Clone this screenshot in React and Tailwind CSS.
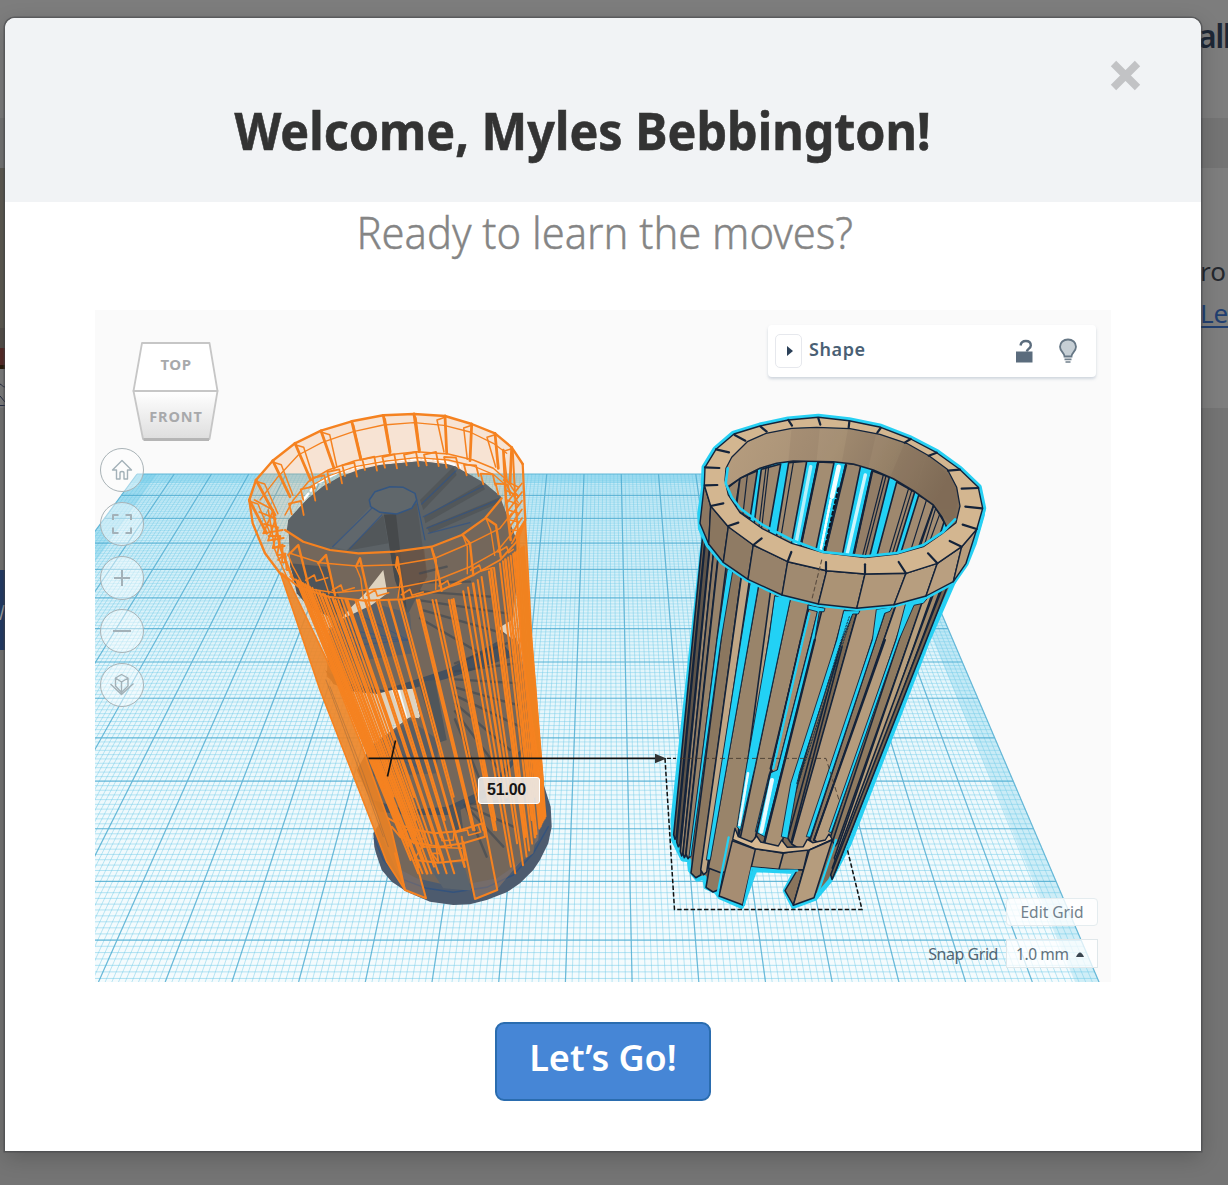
import React from "react";

/* ---------- geometry helpers ---------- */
// Each model part is described in its own tile at triple scale.
const tile = (ox, oy) => (list) =>
  list.map(([x, y]) => `${(ox + x / 3).toFixed(1)},${(oy + y / 3).toFixed(1)}`).join(" ");
const rimR = tile(660, 400);
const bodyR = tile(640, 640);
const rimL = tile(240, 400);
const bodyL = tile(320, 640);

const rowY = (k) => (474 + 5.449 * k) / (1 - 0.03234 * k);
const colTop = (i) => 137 + i * 37.25;
const colBottom = (i) => -235 + i * 66.7;

const fineRows = Array.from({ length: 137 }, (_, i) => i / 10);
const majorRows = Array.from({ length: 14 }, (_, i) => i);
const fineCols = Array.from({ length: 201 }, (_, i) => i / 10);
const majorCols = Array.from({ length: 21 }, (_, i) => i);
const edgeX = (i, y) => colTop(i) + ((colBottom(i) - colTop(i)) * (y - 474)) / 508;

function Workplane() {
  return (
    <g>
      <polygon points="137,474 882,474 1099,982 -235,982" fill="#f4fbfd" />
      <polygon points="137,474 882,474 1099,982 -235,982" fill="url(#far)" />
      <polygon points="137,474 882,474 886,483 130,483" fill="#8fd7ee" opacity=".6" />
      <polygon points="882,474 1099,982 1075,982 864,474" fill="#5cc4e6" opacity=".24" />
      <polygon points="137,474 157,474 -200,982 -235,982" fill="#5cc4e6" opacity=".3" />
      <g stroke="#6fcbe9" strokeWidth="1">
        {fineRows.map((k) => (
          <line key={k} x1={edgeX(0, rowY(k))} x2={edgeX(20, rowY(k))} y1={rowY(k)} y2={rowY(k)} opacity={0.3 + k * 0.015} />
        ))}
      </g>
      <g stroke="#6fcbe9" strokeWidth="1" opacity=".46">
        {fineCols.map((i) => (
          <line key={i} x1={colTop(i)} y1="474" x2={colBottom(i)} y2="982" />
        ))}
      </g>
      <g stroke="#45a5cc" strokeWidth="1.2" opacity=".68">
        {majorRows.map((k) => (
          <line key={k} x1={edgeX(0, rowY(k))} x2={edgeX(20, rowY(k))} y1={rowY(k)} y2={rowY(k)} />
        ))}
        {majorCols.map((i) => (
          <line key={i} x1={colTop(i)} y1="474" x2={colBottom(i)} y2="982" />
        ))}
      </g>
    </g>
  );
}

/* ---------- solid tower ---------- */
const outer = [[135,202],[168,148],[222,102],[300,78],[385,60],[475,52],[567,62],[662,82],[752,117],[830,158],[898,207],[955,262],[968,325],[950,388],[905,440],[832,490],[738,520],[615,522],[500,512],[383,485],[280,435],[205,380],[152,318],[133,255]];
const inner = [[198,205],[215,172],[262,125],[318,100],[395,85],[470,82],[570,86],[660,103],[740,130],[808,168],[862,208],[890,262],[900,318],[888,368],[845,402],[790,440],[710,462],[615,473],[490,458],[395,430],[305,385],[240,338],[205,285],[195,240]];
const ticks = [[135,202,178,204],[168,148,207,157],[224,105,256,122],[302,80,320,95],[385,60,396,77],[475,55,481,74],[568,65,566,83],[662,84,652,98],[752,117,734,128],[830,158,806,167],[900,209,864,212],[955,264,905,266],[966,325,916,320],[950,387,908,374],[905,440,869,423],[832,490,804,460],[738,520,716,486],[615,522,615,493],[498,514,498,486],[383,485,394,456],[280,435,305,415],[205,378,235,368],[152,318,190,310],[136,256,172,255]];
const rimSide = [[133,255],[152,318],[205,380],[280,435],[383,485],[500,512],[615,522],[738,520],[832,490],[905,440],[950,388],[968,325],[966,345],[942,430],[918,490],[880,545],[800,588],[700,614],[590,625],[475,612],[365,585],[262,537],[188,487],[145,435],[122,385],[120,340]];
const rimFacets = [
  { p: [[133,255],[152,318],[146,432],[120,370]], f: "#8d7862" },
  { p: [[152,318],[205,380],[190,487],[146,432]], f: "#8a765f" },
  { p: [[205,380],[280,435],[264,538],[190,487]], f: "#8f7b64" },
  { p: [[280,435],[383,485],[366,585],[264,538]], f: "#97826a" },
  { p: [[383,485],[500,512],[475,612],[366,585]], f: "#a08a70" },
  { p: [[500,512],[615,522],[590,625],[475,612]], f: "#ab9375" },
  { p: [[615,522],[738,520],[702,614],[590,625]], f: "#b1987a" },
  { p: [[738,520],[832,490],[798,588],[702,614]], f: "#b79e7f" },
  { p: [[832,490],[905,440],[880,545],[798,588]], f: "#b99f80" },
  { p: [[905,440],[950,388],[918,490],[880,545]], f: "#b89d7c" },
];
// [top-left x, top-right x, bottom-left x, bottom-right x, bottom y, fill]
const slats = [
  [158,166,101,109,590,"#6f604f"],[168,181,110,120,612,"#5d5349"],[183,194,121,129,640,"#9a856c"],
  [194,207,129,137,645,"#8f7b64"],[208,231,138,150,648,"#97836b"],
  [243,278,153,182,705,"#8b775f"],[278,302,182,200,696,"#c0a685"],
  [327,360,198,240,748,"#8f7a62"],[360,386,262,296,590,"#b8a080"],[327,372,205,280,690,"#99846a"],
  [425,482,301,345,600,"#9f896e"],[484,512,391,412,392,"#a58e72"],
  [524,590,372,424,615,"#a99174"],[606,628,443,462,600,"#7c6953"],[628,697,455,500,618,"#b0977a"],
  [708,732,510,530,606,"#8c775f"],[732,768,522,566,606,"#b59c7d"],
  [777,808,578,592,610,"#8f7a60"],[808,828,583,597,660,"#b89f7d"],[830,845,577,588,690,"#a28b6c"],[847,859,572,580,710,"#75634e"],
];
const slatPoints = ([a, b, c, d, y], top) => {
  const t = top / y;
  return bodyR([[a + (c - a) * t, top], [b + (d - b) * t, top], [d, y], [(c + d) / 2, y + 8], [c, y - 6]]);
};
const innerSlats = [
  [[205,262],[240,235],[225,330],[212,300]], [[240,235],[292,212],[270,356],[228,330]],
  [[304,208],[362,192],[325,402],[282,375]], [[386,188],[440,184],[394,432],[349,412]],
  [[474,186],[522,188],[466,458],[422,440]], [[558,190],[602,196],[546,470],[494,460]],
  [[636,212],[688,232],[628,474],[580,472]], [[710,246],[764,276],[706,466],[650,470]],
  [[776,286],[822,312],[772,452],[722,460]], [[822,314],[852,366],[838,410],[778,446]],
];
const innerLines = [[262,226,248,350],[318,202,296,388],[326,200,304,392],[400,187,362,415],[670,225,606,474],[678,228,614,474],[745,268,685,468],[755,272,695,468],[800,298,750,458],[828,322,790,445],[840,340,805,435]];
const cyanOnBody = [
  [[263,-214],[278,-206],[243,0],[153,650],[147,650],[231,0]],
  [[332,-175],[356,-167],[327,0],[211,660],[199,660],[303,0]],
  [[405,-132],[452,-126],[425,0],[345,380],[301,572],[291,560],[316,400],[386,0]],
  [[505,-105],[555,-95],[552,-85],[538,-85],[524,0],[428,380],[374,590],[346,575],[388,400],[412,390],[512,0],[532,-85],[505,-92]],
  [[612,-88],[660,-88],[655,-78],[638,-78],[606,0],[478,400],[443,595],[424,590],[452,430],[590,0]],
  [[710,-92],[758,-100],[750,-86],[734,-80],[708,0],[511,592],[499,590],[697,0]],
  [[798,-110],[865,-128],[850,-110],[822,-104],[777,0],[574,578],[566,575],[768,0]],
];

function SolidTower() {
  return (
    <g strokeLinejoin="round" strokeLinecap="round">
      <polygon
        points={`${rimR([[122,350],[130,418]])} ${bodyR([[98,540],[100,600],[112,625],[128,658],[147,660],[150,690],[172,718],[193,712],[198,742],[228,755],[240,772],[305,800],[345,690],[465,695],[435,752],[460,800],[525,776],[570,722],[628,612],[865,0]])} ${rimR([[888,530],[950,400]])}`}
        fill="#7d6a55" stroke="#27d0f3" strokeWidth="4.5"
      />
      <g stroke="#14233a" strokeWidth="1.6">
        {slats.map((s, i) => <polygon key={i} points={slatPoints(s, i < 6 ? -310 : -240)} fill={s[5]} />)}
      </g>
      <g fill="#22d1f5" stroke="#14233a" strokeWidth=".9">
        {cyanOnBody.map((p, i) => <polygon key={i} points={bodyR(p)} />)}
      </g>
      <g stroke="#14233a" strokeWidth="2.4">
        <polyline points={bodyR([[524,0],[372,612]])} fill="none" />
        <polyline points={bodyR([[482,0],[345,600]])} fill="none" strokeWidth="1.8" />
        <polyline points={bodyR([[606,20],[455,600]])} fill="none" strokeWidth="1.6" />
        <polyline points={bodyR([[735,0],[522,600]])} fill="none" strokeWidth="2" />
      </g>
      <g stroke="#e8faff" strokeDasharray="5 1.5" fill="none">
        <polyline points={bodyR([[324,400],[298,555]])} strokeWidth="2.6" />
        <polyline points={bodyR([[396,420],[364,575]])} strokeWidth="4" />
      </g>
      <g stroke="#163246" strokeWidth="1" strokeDasharray="1.5 1.5" fill="none">
        <polyline points={bodyR([[508,-80],[488,0],[400,385]])} stroke="#22d1f5" strokeWidth="2.4" />
        <polyline points={bodyR([[635,-70],[612,0],[475,430]])} />
        <polyline points={bodyR([[628,-70],[604,0],[470,430]])} />
      </g>

      {/* doorway */}
      <polygon points={bodyR([[337,625],[430,640],[505,625],[490,690],[415,688],[330,680]])} fill="#a58e72" stroke="#14233a" strokeWidth="1.4" />
      <polygon points={bodyR([[278,598],[285,565],[295,590],[335,606],[350,588],[362,606],[415,618],[425,600],[442,622],[490,620],[502,598],[518,608],[556,600],[567,582],[577,598],[508,630],[430,638],[345,626]])} fill="#d7b993" stroke="#14233a" strokeWidth="1.4" />
      <polygon points={bodyR([[277,602],[346,628],[308,795],[237,768]])} fill="#a68d72" stroke="#14233a" strokeWidth="1.5" />
      <polygon points={bodyR([[490,690],[472,690],[435,752],[460,795]])} fill="#89745c" stroke="#14233a" strokeWidth="1.4" />
      <polygon points={bodyR([[508,630],[577,600],[522,773],[460,796]])} fill="#b59c7d" stroke="#14233a" strokeWidth="1.5" />
      <polyline points={bodyR([[430,640],[417,688]])} stroke="#14233a" strokeWidth="1.6" />
      <g stroke="#22d1f5" strokeWidth="2.2" fill="none">
        <polyline points={bodyR([[266,592],[232,765]])} />
        <polyline points={bodyR([[588,600],[532,765]])} />
        <polyline points={bodyR([[312,795],[336,684],[415,692],[472,692]])} />
      </g>

      {/* rim */}
      <polygon points={rimR(rimSide)} fill="#8d7862" stroke="#27d0f3" strokeWidth="5.6" />
      <polygon points={rimR(outer)} stroke="#27d0f3" strokeWidth="7" fill="none" />
      {rimFacets.map((r, i) => <polygon key={i} points={rimR(r.p)} fill={r.f} stroke="#14233a" strokeWidth="1.4" />)}
      <polygon points={rimR(outer)} fill="#d3b690" stroke="#14233a" strokeWidth="1.4" />
      <clipPath id="opening"><polygon points={rimR(inner)} /></clipPath>
      <g clipPath="url(#opening)">
        <rect x="700" y="410" width="290" height="170" fill="#22d1f5" />
        <g stroke="#f3feff" strokeWidth="3.4">
          <polyline points={rimR([[536,200],[516,290]])} strokeWidth="4.5" />
          <polyline points={rimR([[512,300],[482,450]])} strokeDasharray="3 2" strokeWidth="2.6" />
          <polyline points={rimR([[452,200],[408,430]])} stroke="#b6effa" strokeDasharray="4 1" />
          <polyline points={rimR([[616,225],[562,460]])} stroke="#cdf5fc" strokeDasharray="4 1" />
        </g>
        <g stroke="#14233a" strokeWidth="1.6">
          {innerSlats.map((s, i) => (
            <polygon key={i} points={rimR(s)} fill={["#9a856c", "#937e67", "#9e886e", "#a18b71", "#a38d73"][i % 5]} />
          ))}
          {innerLines.map(([a, b, c, d], i) => (
            <line key={i} x1={660 + a / 3} y1={400 + b / 3} x2={660 + c / 3} y2={400 + d / 3} strokeWidth="1.2" />
          ))}
          {[[474,190,422,438],[558,196,494,458],[636,216,580,468]].map(([a, b, c, d], i) => (
            <line key={i} x1={660 + a / 3} y1={400 + b / 3} x2={660 + c / 3} y2={400 + d / 3} strokeWidth="2.4" />
          ))}
        </g>
        <polyline points={rimR([[535,265],[520,330],[492,455]])} fill="none" stroke="#0c1522" strokeWidth="2" strokeDasharray="3 3" />
        <polygon points={rimR([[190,270],[240,235],[300,205],[350,190],[400,183],[520,185],[580,192],[640,210],[700,236],[760,272],[820,315],[845,350],[862,385],[920,370],[920,230],[760,80],[480,60],[260,80],[180,180]])} fill="url(#wall)" stroke="#14233a" strokeWidth="1.6" />
        <g fill="#5b4a3a" opacity=".09">
          <polygon points={rimR([[395,80],[480,80],[470,182],[385,186]])} />
          <polygon points={rimR([[565,80],[650,95],[625,205],[545,188]])} />
          <polygon points={rimR([[735,125],[800,160],[765,275],[690,232]])} />
          <polygon points={rimR([[800,160],[900,260],[880,380],[820,315],[765,275]])} />
        </g>
      </g>
      <polygon points={rimR(inner)} fill="none" stroke="#14233a" strokeWidth="1.3" />
      <polyline points={rimR([[203,205],[197,250],[215,292],[240,325],[305,373],[395,420],[490,456],[615,469],[710,459],[790,435],[850,395],[885,358]])} fill="none" stroke="#22d1f5" strokeWidth="2.6" />
      <g stroke="#14233a" strokeWidth="2.2">
        {ticks.map(([a, b, c, d], i) => (
          <line key={i} x1={660 + a / 3} y1={400 + b / 3} x2={660 + c / 3} y2={400 + d / 3} />
        ))}
      </g>
      <polyline points={rimR([[485,480],[455,600]])} fill="none" stroke="#5b4d40" strokeWidth="1.1" strokeDasharray="4 3" />
    </g>
  );
}

/* ---------- wireframe tower ---------- */
const hoop = [[28,300],[48,240],[98,182],[165,130],[243,92],[335,64],[430,46],[522,42],[615,48],[695,72],[765,100],[815,142],[848,192]];
const hoopFoot = [[80,400],[105,345],[150,290],[212,240],[282,205],[362,178],[450,158],[538,155],[620,160],[690,182],[775,205],[810,250]];
const hoopLow = [[135,345],[160,300],[205,245],[265,210],[345,182],[440,165],[530,155],[625,162],[700,180],[760,205],[800,240],[835,290]];
const notches = [[165,305],[200,262],[235,228],[280,210],[325,190],[385,172],[445,165],[510,158],[570,158],[630,165],[690,188],[740,215],[785,245]];
const frontTop = [[135,390],[190,425],[270,450],[355,460],[465,455],[575,440],[665,405],[735,355],[785,295]];
const frontMid = [[150,460],[240,488],[350,498],[470,494],[585,475],[690,430],[780,385],[815,340]];
const frontLow = [[125,520],[175,560],[265,590],[375,602],[490,598],[605,570],[700,525],[780,480],[830,425]];
const frontLow2 = [[150,530],[215,568],[285,578],[375,570],[490,560],[590,540],[690,500],[770,455],[820,395]];
const frontPosts = [
  [[145,465],[175,435],[205,555]], [[235,490],[258,465],[285,585]], [[348,500],[360,475],[388,600]], [[468,500],[472,472],[492,598]],
  [[575,445],[590,500],[605,572]], [[668,405],[690,430],[700,525]], [[738,355],[768,375],[782,470]],
];

// [x1, y1, x2, y2, width]
const wires = [];
const spread = [2,7,12,17,22,27,32,38,46,54,62,66,74,84,90,98,108,119,124,146,152,174,182,206,213,240,268,276,320,326,364,374,410,418,424,455,470,486,500,512,534,541,549,566,575,582,590,597,604,609,614,619,624,629,634];
const ends = [660, 590, 700, 620, 540, 680, 720, 470, 610, 700];
spread.forEach((x, i) => {
  const slope = 0.41 - (0.33 * x) / 634;
  const start = -120 + (x > 420 ? -(x - 420) * 0.75 : x < 90 ? -(90 - x) * 0.7 : 0);
  const limit = x > 500 ? 690 - (x - 500) * 1.2 : x > 260 && x < 440 ? 570 : 700;
  const end = Math.min(ends[i % 10], limit);
  wires.push([x + slope * start, start, x + slope * end, end, i % 4 === 1 ? 2.6 : 2]);
});

function WireTower() {
  return (
    <g strokeLinejoin="round" strokeLinecap="round">
      <polygon points={bodyL([[185,540],[160,580],[163,620],[168,640],[185,690],[215,725],[260,755],[330,785],[400,795],[450,793],[500,780],[560,757],[600,730],[640,690],[660,660],[685,610],[695,560],[692,500],[670,430],[400,500]])} fill="#4d5b6e" />
      <polyline points={bodyL([[163,595],[190,660],[240,715],[320,745],[400,757],[500,742],[580,705],[640,640],[685,560]])} fill="none" stroke="#34537d" strokeWidth="1.4" />
      <polygon points={`${rimL([[28,300],[48,240],[98,182],[165,130],[243,92],[335,64],[430,46],[522,42],[615,48],[695,72],[765,100],[815,142],[848,192],[856,360],[830,440]])} ${bodyL([[635,0],[670,430],[655,600],[530,750],[465,777],[430,665],[290,660],[318,775],[255,750],[0,150]])} ${rimL([[120,520],[75,460]])}`} fill="#f0a060" opacity=".25" />
      <polygon points={`${rimL([[145,360],[205,295],[300,230],[420,195],[540,184],[640,195],[655,208],[780,290],[838,440],[832,540],[815,690]])} ${bodyL([[600,20],[645,300],[660,500],[640,640],[530,715],[400,740],[290,715],[225,680],[170,520],[110,390],[150,320],[270,230],[300,230],[280,145],[170,160],[75,150],[20,110]])} ${rimL([[270,640],[190,600],[150,500]])}`} fill="#74675b" />
      {/* stair landing and centre post */}
      <polygon points={rimL([[145,360],[180,320],[205,295],[250,258],[300,230],[360,208],[420,195],[540,184],[640,195],[665,210],[735,250],[785,292],[735,355],[665,405],[575,440],[465,455],[355,460],[270,450],[190,425],[140,392]])} fill="#5c6266" />
      <g fill="#4e5356" opacity=".7">
        <polygon points={rimL([[390,320],[430,345],[320,450],[278,440]])} fill="#626a6f" />
        <polygon points={rimL([[430,345],[445,430],[320,452]])} />
        <polygon points={rimL([[640,200],[650,225],[550,330],[540,300]])} />
        <polygon points={rimL([[725,250],[735,268],[556,370],[552,350]])} />
        <polygon points={rimL([[780,292],[770,312],[570,400],[560,382]])} />
      </g>
      <g stroke="#2f5388" strokeWidth="1.2" fill="none" opacity=".7">
        <polyline points={rimL([[278,440],[395,325]])} /><polyline points={rimL([[330,445],[425,345]])} />
        <polyline points={rimL([[545,312],[648,212]])} /><polyline points={rimL([[550,350],[730,258]])} />
        <polyline points={rimL([[560,385],[775,300]])} /><polyline points={rimL([[565,400],[690,368]])} />
      </g>
      <polygon points={rimL([[430,330],[530,310],[560,530],[500,650],[465,540]])} fill="#54585b" />
      <polygon points={rimL([[432,345],[468,342],[500,630],[465,540]])} fill="#46494b" />
      <polygon points={rimL([[465,458],[552,445],[562,530],[520,600],[490,590]])} fill="#6b5545" opacity=".8" />
      <polygon points={rimL([[388,300],[405,275],[450,260],[490,262],[525,280],[530,300],[515,325],[470,342],[420,337],[392,320]])} fill="#60676b" stroke="#345682" strokeWidth="1.5" />
      <polyline points={rimL([[530,300],[555,420]])} fill="none" stroke="#345682" strokeWidth="1.2" />
      {/* spiral flights */}
      <g fill="#4f5459">
        <polygon points={rimL([[150,490],[260,500],[310,620],[280,655],[210,625],[170,580]])} />
        <polygon points={rimL([[290,665],[400,610],[510,640],[520,760],[300,790]])} fill="#5a6068" />
        <polygon points={bodyL([[15,90],[80,130],[190,150],[300,115],[390,85],[540,0],[580,50],[400,110],[280,145],[200,162],[110,160],[40,132]])} fill="#44505e" />
        <polygon points={bodyL([[295,125],[345,120],[380,300],[350,310]])} fill="#50565a" />
        <polygon points={bodyL([[150,320],[270,240],[355,300],[350,400],[160,410]])} fill="#5b5d61" />
        <polygon points={bodyL([[160,480],[260,510],[380,500],[500,445],[610,320],[600,350],[500,470],[390,525],[260,525],[180,515]])} fill="#46525f" />
        <polygon points={bodyL([[380,500],[420,500],[430,570],[405,570]])} />
        <polygon points={bodyL([[320,670],[430,670],[455,752],[370,745]])} fill="#5b646d" />
      </g>
      <g stroke="#3d4651" strokeWidth="2.4" opacity=".6">
        {[[620,500],[690,545],[750,590],[800,640],[790,700],[720,760]].map(([x, y], i) => (
          <line key={i} x1={240 + 540 / 3} y1={400 + 520 / 3 + i * 9} x2={240 + x / 3} y2={400 + y / 3} />
        ))}
        {[[560,10],[590,70],[600,130],[610,200],[600,260],[570,330],[530,380],[480,420]].map(([x, y], i) => (
          <line key={i} x1={320 + 405 / 3} y1={640 + (70 + i * 24) / 3} x2={320 + x / 3} y2={640 + y / 3} />
        ))}
        {[[170,330],[190,300],[220,270],[260,250]].map(([x, y], i) => (
          <line key={i} x1="420" y1="768" x2={320 + x / 3} y2={640 + y / 3} stroke="#34537d" strokeWidth="1" />
        ))}
        {[[560,480],[580,560],[550,620],[500,650]].map(([x, y], i) => (
          <line key={i} x1="465" y1="805" x2={320 + x / 3} y2={640 + y / 3} />
        ))}
        {[[270,680],[280,710],[300,740],[350,640]].map(([x, y], i) => (
          <line key={i} x1="408" y1="640" x2={240 + x / 3} y2={400 + y / 3} stroke="#2f5388" strokeWidth="1" />
        ))}
      </g>
      {/* light showing between the flights */}
      <g fill="#ded3c0">
        <polygon points={rimL([[430,510],[442,580],[395,615],[300,660],[335,620],[375,580]])} />
        <polygon points={bodyL([[75,152],[170,162],[215,150],[280,148],[298,235],[270,232],[215,255],[148,318]])} />
        <polygon points={bodyL([[215,150],[240,150],[262,232],[248,240]])} fill="#f3fbfd" />
        <polygon points={rimL([[245,650],[270,650],[280,680],[262,686]])} />
        <polygon points={rimL([[775,685],[815,660],[822,720]])} />
      </g>
      {/* white highlights at the back of the landing */}
      <polyline points={rimL([[190,300],[230,250],[300,215],[370,195],[450,182],[540,176],[600,180],[660,200]])} fill="none" stroke="#fff" strokeWidth="2.4" strokeDasharray="8 4" />

      <g stroke="#f58220" fill="none" strokeWidth="1.7">
        {wires.map(([a, b, c, d, w], i) => (
          <line key={i} x1={320 + a / 3} y1={640 + b / 3} x2={320 + c / 3} y2={640 + d / 3} strokeWidth={w} />
        ))}
        <polygon points={`${rimL([[122,522],[145,540]])} ${bodyL([[40,100],[130,330],[212,560],[240,680],[255,750],[200,665],[160,560],[0,150]])}`} fill="#ee8322" fillOpacity=".88" />
        <g stroke="#9a6a40" strokeWidth=".7" opacity=".7">
          <polyline points={bodyL([[18,120],[110,370],[190,590]])} />
          <polyline points={bodyL([[30,140],[130,400],[205,620]])} />
        </g>
        <polygon points={`${rimL([[830,400],[856,360]])} ${bodyL([[635,0],[670,430],[650,330],[618,120],[602,0]])}`} fill="#f0821f" fillOpacity=".9" />
        <polyline points={rimL(hoop)} strokeWidth="2.4" />
        <polyline points={rimL([[28,300],[38,370],[75,460],[120,520]])} strokeWidth="2.4" />
        <polyline points={rimL([[848,192],[856,360],[830,425]])} strokeWidth="2.2" />
        <polyline points={rimL([[60,300],[110,235],[175,165],[245,128],[340,95],[430,75],[522,68],[612,76],[690,96],[760,130],[800,160]])} strokeWidth="1.3" />
        <polyline points={rimL(hoopLow)} strokeWidth="1.5" />
        <polyline points={rimL(hoopLow.slice(2).map(([x, y]) => [x, y + 18]))} strokeWidth="1.3" />
        {hoopFoot.map(([u, v], i) => {
          const [x, y] = hoop[i];
          const side = i > 7 ? -24 : i < 5 ? 26 : 6;
          return (
            <g key={i}>
              <polyline points={rimL([[x, y], [u, v]])} strokeWidth="2.8" />
              <polyline points={rimL([[x, y + 4], [x + side, y + 12], [u + side / 3, v - 4]])} strokeWidth="1.5" />
            </g>
          );
        })}
        {notches.map(([x, y], i) => (
          <polyline key={i} points={rimL([[x - 10, y + 38], [x - 18, y + 6], [x + 18, y - 2 + (i > 8 ? 10 : 0)], [x + 26, y + 40]])} strokeWidth="1.8" />
        ))}
        <polyline points={rimL(frontTop)} strokeWidth="2.2" />
        <polyline points={rimL(frontMid)} strokeWidth="1.5" />
        <polyline points={rimL(frontLow)} strokeWidth="2" />
        <polyline points={rimL(frontLow2)} strokeWidth="1.5" />
        {frontPosts.map(([[a, b], [c, d], [e, f]], i) => (
          <React.Fragment key={i}>
            <polyline points={rimL([[a, b], [c, d], [e, f]])} strokeWidth="2.4" />
            <polyline points={rimL([[a, b], [a + 14, b + 35], [e - 18, f - 4]])} strokeWidth="1.4" />
            <polyline points={rimL([[e - 8, f - 14], [e + 18, f - 30], [e + 24, f - 12], [Math.min(e + 58, 820), f - 22]])} strokeWidth="1.6" />
          </React.Fragment>
        ))}
        {[0, 1, 2, 3, 4, 5].map((i) => (
          <React.Fragment key={i}>
            <polyline points={rimL([[44 + i * 14, 300 + i * 36], [100 + i * 7, 330 + i * 26], [70 + i * 14, 400 + i * 22], [128 + i * 3, 390 + i * 24]])} strokeWidth="1.8" />
            <polyline points={rimL([[790 + i * 5, 240 + i * 30], [836, 262 + i * 26], [800 + i * 3, 310 + i * 24], [846, 250 + i * 26]])} strokeWidth="1.6" />
          </React.Fragment>
        ))}
        <polyline points={rimL([[100,340],[120,440],[160,540]])} strokeWidth="2.6" />
        <polyline points={rimL([[85,330],[105,450],[140,530]])} strokeWidth="1.6" />
        <polyline points={rimL([[790,150],[798,300],[812,420]])} strokeWidth="2.6" />
        <polyline points={rimL([[818,150],[826,300],[838,440]])} strokeWidth="2" />
        {/* doorway outline */}
        <polyline points={bodyL([[205,535],[240,555],[290,570],[345,580],[410,574],[490,550],[495,590],[430,610],[360,620],[285,608],[240,590],[215,560]])} strokeWidth="2" />
        <polyline points={bodyL([[232,560],[240,585],[262,568],[285,575],[285,598],[310,596],[315,578]])} strokeWidth="1.6" />
        <polyline points={bodyL([[362,584],[366,602],[400,600],[402,578],[442,570],[446,586],[482,576],[475,556]])} strokeWidth="1.6" />
        <polyline points={bodyL([[270,600],[318,775],[255,750],[225,640]])} strokeWidth="2" />
        <polyline points={bodyL([[285,660],[355,668],[435,660],[425,590]])} strokeWidth="2" />
        <polyline points={bodyL([[430,605],[465,777],[532,750],[495,560]])} strokeWidth="2" />
        <polyline points={bodyL([[345,590],[355,665],[335,640],[362,640]])} strokeWidth="1.8" />
        <polyline points={bodyL([[285,655],[305,620],[425,625]])} strokeWidth="1.5" />
      </g>
    </g>
  );
}

function Measure() {
  return (
    <g fill="none" stroke="#111">
      <path d="M368.500 758.400H658" strokeWidth="1.6" />
      <path d="M395.500 740.500 387.500 776.500" strokeWidth="1.6" />
      <path d="M655 753.700 666.500 758.400 655 763.200z" fill="#333" stroke="none" />
      <path d="M665 758.400 674.500 909.500H862L847 848" strokeWidth="1.5" strokeDasharray="4.500 2.200" />
      <path d="M667 758.400H676" strokeWidth="1.4" strokeDasharray="4 2" />
      <path d="M680 758.400H826L839 800" stroke="#40352b" strokeWidth="1" strokeDasharray="5 3" opacity=".8" />
    </g>
  );
}

function Scene() {
  return (
    <svg className="block h-[672px] w-[1016px]" viewBox="95 310 1016 672">
      <defs>
        <linearGradient id="far" x1="0" y1="0" x2="0" y2="1">
          <stop offset="0" stopColor="#9fdcf0" stopOpacity=".65" />
          <stop offset=".35" stopColor="#b8e6f5" stopOpacity=".3" />
          <stop offset="1" stopColor="#e6f6fc" stopOpacity="0" />
        </linearGradient>
        <linearGradient id="wall" x1="0" y1="0" x2="1" y2=".25">
          <stop offset="0" stopColor="#b99f80" />
          <stop offset=".5" stopColor="#a69075" />
          <stop offset="1" stopColor="#84705a" />
        </linearGradient>
        <linearGradient id="face" x1="0" y1="0" x2="0" y2="1">
          <stop offset="0" stopColor="#fff" />
          <stop offset="1" stopColor="#dedede" />
        </linearGradient>
      </defs>
      <Workplane />
      <WireTower />
      <SolidTower />
      <Measure />
      <g stroke="#c6c6c6" strokeWidth="1.8" strokeLinejoin="round">
        <polygon points="142,343 209.500,343 217.500,391 133.500,391" fill="#fff" />
        <polygon points="133.500,391 217.500,391 209.500,439 143,439" fill="url(#face)" />
        <path d="M143.500 439.500H209" stroke="#b5b5b5" strokeWidth="3" />
      </g>
    </svg>
  );
}

const tools = [
  <path d="M1.500 11 11 1.500 20.500 11H16.500V20H13V14Q13 12.500 11 12.500T9 14V20H5.500V11z" />,
  <path d="M2 7V2H7.500M14.500 2H20V7M20 14.500V20H14.500M7.500 20H2V14.500" strokeWidth="2" />,
  <path d="M11 3V19M3 11H19" strokeWidth="2" />,
  <path d="M2 11H20" strokeWidth="2" />,
  <path d="M10.500 0.500 17 4V12L10.500 18.500 4.500 12V4zM4.500 4 10.500 8 17 4M10.500 8V18.500M-0.500 10 10.500 20.500 22.500 9.500" />,
];

function ToolColumn() {
  return (
    <div className="absolute left-[5px] top-[138px] flex flex-col gap-[9.8px]">
      {tools.map((icon, i) => (
        <button key={i} className="flex size-[44px] items-center justify-center rounded-full border-[1.5px] border-[#a9b3b7] bg-white/45">
          <svg className="size-[22px] overflow-visible" viewBox="0 0 22 22" fill="none" stroke="#a3b1b8" strokeWidth="1.4" strokeLinejoin="round">{icon}</svg>
        </button>
      ))}
    </div>
  );
}

function ShapePanel() {
  return (
    <div className="absolute left-[673px] top-[15px] flex h-[52px] w-[328px] items-center rounded bg-white pl-[7px] pr-[18px] shadow-[0_2px_3px_rgba(130,145,170,0.35)]">
      <div className="flex h-[34px] w-[27px] items-center justify-center rounded-[5px] border-[1.5px] border-[#e6e8ed] pl-[2px]">
        <svg className="h-[10px] w-[6px]" viewBox="0 0 6 10"><path d="M0 0 6 5 0 10z" fill="#2b4058" /></svg>
      </div>
      <span className="ml-[7px] -mt-[4px] flex-1 text-[18px] font-semibold tracking-[0.6px] text-[#4a5f74]">Shape</span>
      <svg className="mr-[25px] h-[24px] w-[18px]" viewBox="0 0 18 24">
        <path d="M1 12.500H17.500V23.500H1z" fill="#5b6c7d" />
        <path d="M5.500 6.500C6 3.500 8 2 10.800 2 13.800 2 15.800 3.800 15.800 6.500 15.800 9.500 12.300 9.500 11.800 12.500" fill="none" stroke="#5b6c7d" strokeWidth="2.4" />
      </svg>
      <svg className="h-[26px] w-[20px]" viewBox="0 0 20 26">
        <path d="M6.500 18.500C6.500 14.500 2 13.500 2 8.800 2 4.500 5.500 1.500 10 1.500S18 4.500 18 8.800C18 13.500 13.500 14.500 13.500 18.500z" fill="#c6cfd5" stroke="#667785" strokeWidth="1.800" />
        <path d="M6.500 21.300H13.500M7.500 24H12.500" stroke="#71808c" strokeWidth="1.700" />
      </svg>
    </div>
  );
}

function Viewport() {
  return (
    <div className="relative mt-[52px] h-[672px] w-[1016px] overflow-hidden bg-[#fafafa]">
      <Scene />
      <span className="absolute left-[40px] top-[44px] w-[82px] text-center text-[15px] leading-5 font-bold tracking-[0.5px] text-[#a8a9ab]">TOP</span>
      <span className="absolute left-[40px] top-[96px] w-[82px] text-center text-[14.5px] leading-5 font-bold tracking-[0.9px] text-[#a8a9ab]">FRONT</span>
      <ToolColumn />
      <ShapePanel />
      <div className="absolute left-[383px] top-[467px] flex h-[27px] w-[62px] items-center rounded-[3px] border border-white bg-[#ece9e6]/90 pl-[8px] pb-[1px] font-['Liberation_Sans'] text-[16px] font-bold tracking-[-0.2px] text-[#151515]">51.00</div>
      <div className="absolute right-[13px] top-[588px] flex h-[28px] w-[92px] items-center justify-center rounded-sm border border-[#e4ecef] bg-white/80 pt-[2px] text-[15.5px] text-[#72818c]">Edit Grid</div>
      <div className="absolute right-[13px] top-[629px] flex h-[29px] items-center">
        <span className="mr-[8px] text-[16px] tracking-[-0.45px] text-[#536673]">Snap Grid</span>
        <span className="flex h-full w-[92px] items-center border border-[#dfe7ea] bg-white/75 pl-[9px] pt-[2px] text-[15.5px] text-[#60717c]">
          <span className="w-[53px] whitespace-nowrap tracking-[-0.4px]">1.0 mm</span>
          <svg className="ml-[7px] h-[5px] w-[8px]" viewBox="0 0 8 5"><path d="M0 5Q4-4 8 5z" fill="#3a4650" /></svg>
        </span>
      </div>
    </div>
  );
}

function Backdrop() {
  return (
    <div className="h-full overflow-hidden bg-[#747474]">
      <div className="flex h-[118px] justify-end bg-[#7d7d7d]">
        <span className="w-[30px] pt-[16px] text-[32px] leading-10 font-semibold tracking-[-1.5px] text-[#1d2736]">all</span>
      </div>
      <div className="h-[50px] bg-[#747474]" />
      <div className="flex h-[240px] justify-between bg-[#7e7e7e]">
        <div className="w-[5px] overflow-hidden">
          <div className="h-[160px] bg-[#5e5b53]" />
          <div className="h-[20px] bg-[#55504b]" />
          <div className="h-[17px] bg-[#572c29]" />
          <div className="h-[4px] bg-[#2a1c0c]" />
          <div className="h-[37px] border-b border-[#242b45]">
            <svg className="h-[37px] w-[5px]" viewBox="0 0 5 37" fill="none" stroke="#262c44"><path d="M0 15C2 16 3 18 5 18M0 27 5 33" /></svg>
          </div>
        </div>
        <div className="w-[28px] whitespace-nowrap pt-[82px] text-[26px] leading-[42px] text-[#24282e]">
          <div>ro</div>
          <div className="text-[#213f70] underline decoration-2 underline-offset-[3px]">Le</div>
        </div>
      </div>
      <div className="mt-[162px] flex h-[80px] w-[5px] items-center justify-end overflow-hidden bg-[#243c66] text-[27px] font-light text-[#a0a0a0]"><span>w</span></div>
    </div>
  );
}

export default function App() {
  return (
    <div className="relative h-[1185px] w-[1228px] overflow-hidden font-['Noto_Sans','Open_Sans',sans-serif]">
      <Backdrop />
      <section role="dialog" className="absolute left-[5px] top-[18px] flex h-[1133px] w-[1196px] flex-col rounded-t-[10px] bg-white shadow-[0_0_0_1.5px_rgba(60,62,65,0.5),0_6px_22px_rgba(0,0,0,0.2)]">
        <header className="relative flex h-[184px] items-center justify-center rounded-t-[10px] bg-[#f1f3f5] pr-[40px] pt-[40px]">
          <h1 className="scale-x-[0.932] whitespace-nowrap text-[52px] leading-none font-bold text-[#333] [-webkit-text-stroke:0.6px_#333]">Welcome, Myles Bebbington!</h1>
          <button aria-label="Close" className="absolute right-[60px] top-[42px]">
            <svg className="size-[31px]" viewBox="0 0 31 31"><path d="M3.500 3.500 27.500 27.500M27.500 3.500 3.500 27.500" stroke="#c2c3c5" strokeWidth="7.600" /></svg>
          </button>
        </header>
        <div className="flex flex-1 flex-col items-center">
          <p className="h-[56px] scale-x-[0.948] whitespace-nowrap pl-[4px] pt-[3px] font-['Noto_Sans'] text-[44px] leading-[54px] font-light text-[#858585] [-webkit-text-stroke:0.4px_#858585]">Ready to learn the moves?</p>
          <Viewport />
          <button className="mt-[40px] flex h-[79px] w-[216px] items-center justify-center rounded-[9px] border-2 border-[#2a6caf] bg-[#4686d6] pb-[7px] text-[36px] font-semibold text-white">Let’s Go!</button>
        </div>
      </section>
    </div>
  );
}
